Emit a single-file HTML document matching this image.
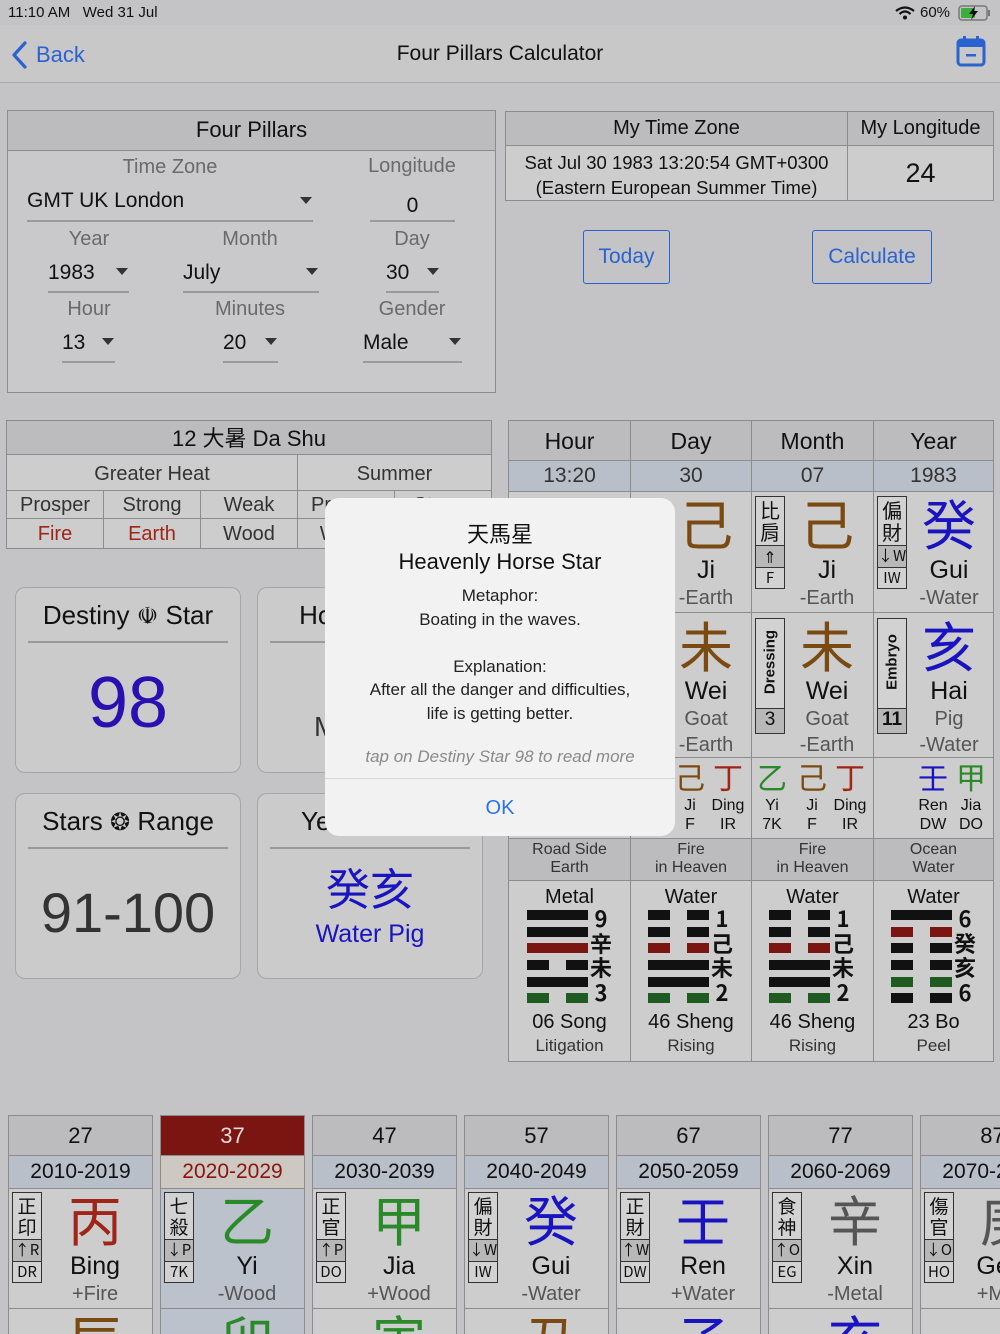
<!DOCTYPE html>
<html style="width:1000px;height:1334px;overflow:hidden"><head><meta charset="utf-8"><style>
*{margin:0;padding:0;box-sizing:border-box}
html{overflow:hidden}
body{width:1000px;height:1334px;overflow:hidden;background:#c4c4c6;font-family:"Liberation Sans","Noto Sans CJK TC",sans-serif;color:#111;position:relative}
.a{position:absolute}
.c{position:absolute;text-align:center;white-space:nowrap}
.b{position:absolute;border:1px solid #8c8c8c}
.g{color:#6a6a6a}
.ul{position:absolute;height:2px;background:#9a9a9a}
.ar{position:absolute;width:0;height:0;border-left:6px solid transparent;border-right:6px solid transparent;border-top:7px solid #333}
.cell{position:absolute;background:#cdcdcd;border:1px solid #8c8c8c}
.hd{background:#bcbcbe}
.dt{background:#b9bfc8}
.card{position:absolute;background:#cbcbcb;border:1.5px solid #a6a6a6;border-radius:10px}
.tg{position:absolute;width:30px;border:1.5px solid #333;background:#d2d2d2;font-size:13px;text-align:center;line-height:1}
.tg div{border-top:1.5px solid #333}
.cj{font-family:"Noto Sans CJK TC","Liberation Sans",sans-serif}
</style></head><body>

<div class="a" style="left:8px;top:4px;font-size:15px">11:10 AM&nbsp;&nbsp;&nbsp;Wed 31 Jul</div>
<div class="a" style="left:920px;top:4px;font-size:15px">60%</div>
<svg class="a" style="left:895px;top:6px" width="20" height="14" viewBox="0 0 20 14"><path d="M1 5 Q10 -2 19 5" stroke="#111" stroke-width="2.2" fill="none"/><path d="M4.5 8 Q10 3 15.5 8" stroke="#111" stroke-width="2.2" fill="none"/><circle cx="10" cy="11.5" r="2" fill="#111"/></svg>
<svg class="a" style="left:958px;top:5px" width="34" height="16" viewBox="0 0 34 16"><rect x="1" y="1" width="28" height="14" rx="3" fill="none" stroke="#777" stroke-width="1.5"/><rect x="3" y="3" width="14" height="10" rx="1" fill="#3cae3c"/><rect x="30" y="5" width="2" height="6" fill="#777"/><path d="M17 1 L11 9 H15 L13 15 L20 6 H16 Z" fill="#111"/></svg>

<div class="a" style="left:0;top:25px;width:1000px;height:58px;background:#c8c8c8;border-bottom:1.5px solid #aaa"></div>
<svg class="a" style="left:10px;top:41px" width="18" height="28" viewBox="0 0 18 28"><path d="M15 2 L4 14 L15 26" stroke="#2a62d0" stroke-width="3.2" fill="none" stroke-linecap="round" stroke-linejoin="round"/></svg>
<div class="a" style="left:36px;top:42px;font-size:22px;color:#2a62d0">Back</div>
<div class="c" style="left:300px;width:400px;top:42px;font-size:21px">Four Pillars Calculator</div>
<svg class="a" style="left:955px;top:35px" width="32" height="32" viewBox="0 0 32 32"><rect x="3" y="5" width="26" height="25" rx="3" fill="none" stroke="#2a62d0" stroke-width="3"/><rect x="3" y="5" width="26" height="7" fill="#2a62d0"/><rect x="8" y="1" width="3" height="7" fill="#2a62d0"/><rect x="21" y="1" width="3" height="7" fill="#2a62d0"/><rect x="11" y="19" width="10" height="2.5" fill="#2a62d0"/></svg>

<div class="b" style="left:7px;top:110px;width:489px;height:283px;background:#c9c9cb"></div>
<div class="b hd" style="left:7px;top:110px;width:489px;height:41px"></div>
<div class="c" style="left:7px;width:489px;top:117px;font-size:22px">Four Pillars</div>
<div class="c g" style="left:70px;width:200px;top:156px;font-size:20px">Time Zone</div>
<div class="c g" style="left:332px;width:160px;top:155px;font-size:20px">Longitude</div>
<div class="a" style="left:27px;top:189px;font-size:21px">GMT UK London</div>
<div class="ar" style="left:300px;top:197px"></div>
<div class="ul" style="left:27px;top:220px;width:286px"></div>
<div class="c" style="left:370px;width:85px;top:194px;font-size:21px">0</div>
<div class="ul" style="left:370px;top:220px;width:85px"></div>
<div class="c g" style="left:9px;width:160px;top:228px;font-size:20px">Year</div>
<div class="c g" style="left:170px;width:160px;top:228px;font-size:20px">Month</div>
<div class="c g" style="left:332px;width:160px;top:228px;font-size:20px">Day</div>
<div class="a" style="left:48px;top:261px;font-size:21px">1983</div>
<div class="ar" style="left:116px;top:268px"></div>
<div class="ul" style="left:48px;top:291px;width:81px"></div>
<div class="a" style="left:183px;top:261px;font-size:21px">July</div>
<div class="ar" style="left:306px;top:268px"></div>
<div class="ul" style="left:183px;top:291px;width:136px"></div>
<div class="a" style="left:386px;top:261px;font-size:21px">30</div>
<div class="ar" style="left:427px;top:268px"></div>
<div class="ul" style="left:386px;top:291px;width:53px"></div>
<div class="c g" style="left:9px;width:160px;top:298px;font-size:20px">Hour</div>
<div class="c g" style="left:170px;width:160px;top:298px;font-size:20px">Minutes</div>
<div class="c g" style="left:332px;width:160px;top:298px;font-size:20px">Gender</div>
<div class="a" style="left:62px;top:331px;font-size:21px">13</div>
<div class="ar" style="left:102px;top:338px"></div>
<div class="ul" style="left:62px;top:361px;width:53px"></div>
<div class="a" style="left:223px;top:331px;font-size:21px">20</div>
<div class="ar" style="left:265px;top:338px"></div>
<div class="ul" style="left:223px;top:361px;width:55px"></div>
<div class="a" style="left:363px;top:331px;font-size:21px">Male</div>
<div class="ar" style="left:449px;top:338px"></div>
<div class="ul" style="left:363px;top:361px;width:99px"></div>

<div class="cell hd" style="left:505px;top:111px;width:343px;height:35px"></div>
<div class="cell hd" style="left:847px;top:111px;width:147px;height:35px"></div>
<div class="cell" style="left:505px;top:145px;width:343px;height:56px"></div>
<div class="cell" style="left:847px;top:145px;width:147px;height:56px"></div>
<div class="c" style="left:505px;width:343px;top:117px;font-size:20px">My Time Zone</div>
<div class="c" style="left:847px;width:147px;top:117px;font-size:20px">My Longitude</div>
<div class="c" style="left:505px;width:343px;top:150px;font-size:18.5px;line-height:25px">Sat Jul 30 1983 13:20:54 GMT+0300<br>(Eastern European Summer Time)</div>
<div class="c" style="left:847px;width:147px;top:158px;font-size:27px">24</div>

<div class="a" style="left:583px;top:230px;width:87px;height:54px;border:1.5px solid #2a62d0;border-radius:3px;color:#2a62d0;font-size:21px;text-align:center;line-height:51px">Today</div>
<div class="a" style="left:812px;top:230px;width:120px;height:54px;border:1.5px solid #2a62d0;border-radius:3px;color:#2a62d0;font-size:21px;text-align:center;line-height:51px">Calculate</div>

<div class="cell hd" style="left:6px;top:420px;width:486px;height:35px"></div>
<div class="c" style="left:6px;width:486px;top:427px;font-size:22px;line-height:24px">12 大暑 Da Shu</div>
<div class="cell" style="left:6px;top:454px;width:292px;height:37px"></div>
<div class="cell" style="left:297px;top:454px;width:195px;height:37px"></div>
<div class="c" style="left:6px;width:292px;top:463px;font-size:20px;color:#333">Greater Heat</div>
<div class="c" style="left:297px;width:195px;top:463px;font-size:20px;color:#333">Summer</div>
<div class="cell" style="left:6px;top:490px;width:98px;height:29px"></div>
<div class="cell" style="left:103px;top:490px;width:98px;height:29px"></div>
<div class="cell" style="left:200px;top:490px;width:98px;height:29px"></div>
<div class="cell" style="left:297px;top:490px;width:98px;height:29px"></div>
<div class="cell" style="left:394px;top:490px;width:98px;height:29px"></div>
<div class="cell" style="left:6px;top:518px;width:98px;height:31px"></div>
<div class="cell" style="left:103px;top:518px;width:98px;height:31px"></div>
<div class="cell" style="left:200px;top:518px;width:98px;height:31px"></div>
<div class="cell" style="left:297px;top:518px;width:98px;height:31px"></div>
<div class="cell" style="left:394px;top:518px;width:98px;height:31px"></div>
<div class="c" style="left:6px;width:98px;top:494px;font-size:20px;color:#333">Prosper</div>
<div class="c" style="left:103px;width:98px;top:494px;font-size:20px;color:#333">Strong</div>
<div class="c" style="left:200px;width:98px;top:494px;font-size:20px;color:#333">Weak</div>
<div class="c" style="left:6px;width:98px;top:523px;font-size:20px;color:#a02418">Fire</div>
<div class="c" style="left:103px;width:98px;top:523px;font-size:20px;color:#a02418">Earth</div>
<div class="c" style="left:200px;width:98px;top:523px;font-size:20px;color:#333">Wood</div>
<div class="c" style="left:297px;width:98px;top:523px;font-size:20px;color:#333">Water</div>
<div class="c" style="left:297px;width:98px;top:494px;font-size:20px;color:#333">Prosper</div>
<div class="c" style="left:394px;width:98px;top:494px;font-size:20px;color:#333">Strong</div>

<div class="card" style="left:15px;top:587px;width:226px;height:186px"></div>
<div class="c" style="left:15px;width:226px;top:600px;font-size:26px">Destiny <span style="font-size:24px">☫</span> Star</div>
<div class="a" style="left:28px;top:641px;width:200px;height:1.5px;background:#999"></div>
<div class="c" style="left:15px;width:226px;top:662px;font-size:72px;color:#2a10b0">98</div>

<div class="card" style="left:257px;top:587px;width:226px;height:186px"></div>
<div class="c" style="left:257px;width:226px;top:600px;font-size:26px">Hour ☸ Star</div>
<div class="a" style="left:270px;top:641px;width:200px;height:1.5px;background:#999"></div>
<div class="c" style="left:257px;width:226px;top:711px;font-size:28px;color:#333">Metal Ox</div>

<div class="card" style="left:15px;top:793px;width:226px;height:186px"></div>
<div class="c" style="left:15px;width:226px;top:806px;font-size:26px">Stars <span style="font-size:24px">❂</span> Range</div>
<div class="a" style="left:28px;top:847px;width:200px;height:1.5px;background:#999"></div>
<div class="c" style="left:15px;width:226px;top:880px;font-size:56px;color:#333">91-100</div>

<div class="card" style="left:257px;top:793px;width:226px;height:186px"></div>
<div class="c" style="left:257px;width:226px;top:806px;font-size:26px">Year ☸ Star</div>
<div class="a" style="left:270px;top:847px;width:200px;height:1.5px;background:#999"></div>
<div class="c cj" style="left:257px;width:226px;top:862px;font-size:44px;color:#1a14c0;line-height:1.1">癸亥</div>
<div class="c" style="left:257px;width:226px;top:920px;font-size:25px;color:#1a14c0">Water Pig</div>

<div class="cell hd" style="left:508px;top:420px;width:123px;height:41px"></div>
<div class="cell hd" style="left:630px;top:420px;width:122px;height:41px"></div>
<div class="cell hd" style="left:751px;top:420px;width:123px;height:41px"></div>
<div class="cell hd" style="left:873px;top:420px;width:121px;height:41px"></div>
<div class="c" style="left:508px;width:123px;top:428px;font-size:23px">Hour</div>
<div class="c" style="left:630px;width:122px;top:428px;font-size:23px">Day</div>
<div class="c" style="left:751px;width:123px;top:428px;font-size:23px">Month</div>
<div class="c" style="left:873px;width:121px;top:428px;font-size:23px">Year</div>
<div class="cell dt" style="left:508px;top:460px;width:123px;height:32px"></div>
<div class="cell dt" style="left:630px;top:460px;width:122px;height:32px"></div>
<div class="cell dt" style="left:751px;top:460px;width:123px;height:32px"></div>
<div class="cell dt" style="left:873px;top:460px;width:121px;height:32px"></div>
<div class="c" style="left:508px;width:123px;top:464px;font-size:21px;color:#333">13:20</div>
<div class="c" style="left:630px;width:122px;top:464px;font-size:21px;color:#333">30</div>
<div class="c" style="left:751px;width:123px;top:464px;font-size:21px;color:#333">07</div>
<div class="c" style="left:873px;width:121px;top:464px;font-size:21px;color:#333">1983</div>
<div class="cell" style="left:508px;top:491px;width:123px;height:122px"></div>
<div class="cell" style="left:630px;top:491px;width:122px;height:122px"></div>
<div class="cell" style="left:751px;top:491px;width:123px;height:122px"></div>
<div class="cell" style="left:873px;top:491px;width:121px;height:122px"></div>
<div class="cell" style="left:508px;top:612px;width:123px;height:146px"></div>
<div class="cell" style="left:630px;top:612px;width:122px;height:146px"></div>
<div class="cell" style="left:751px;top:612px;width:123px;height:146px"></div>
<div class="cell" style="left:873px;top:612px;width:121px;height:146px"></div>
<div class="cell" style="left:508px;top:757px;width:123px;height:82px"></div>
<div class="cell" style="left:630px;top:757px;width:122px;height:82px"></div>
<div class="cell" style="left:751px;top:757px;width:123px;height:82px"></div>
<div class="cell" style="left:873px;top:757px;width:121px;height:82px"></div>
<div class="cell hd" style="left:508px;top:838px;width:123px;height:43px"></div>
<div class="cell hd" style="left:630px;top:838px;width:122px;height:43px"></div>
<div class="cell hd" style="left:751px;top:838px;width:123px;height:43px"></div>
<div class="cell hd" style="left:873px;top:838px;width:121px;height:43px"></div>
<div class="cell" style="left:508px;top:880px;width:123px;height:182px"></div>
<div class="cell" style="left:630px;top:880px;width:122px;height:182px"></div>
<div class="cell" style="left:751px;top:880px;width:123px;height:182px"></div>
<div class="cell" style="left:873px;top:880px;width:121px;height:182px"></div>

<div class="c cj" style="left:666px;width:80px;top:490px;font-size:54px;color:#7a4a12;line-height:1.2">己</div>
<div class="c" style="left:666px;width:80px;top:556px;font-size:25px">Ji</div>
<div class="c g" style="left:666px;width:80px;top:587px;font-size:20px;color:#555">-Earth</div>
<div class="tg cj" style="left:755px;top:496px"><p style="padding:2px 0;line-height:22px;font-size:20px">比<br>肩</p><div style="background:#b8b8b8;height:22px;line-height:20px;font-size:16px">⇑</div><div style="height:21px;line-height:20px;font-size:15px">F</div></div>
<div class="c cj" style="left:787px;width:80px;top:490px;font-size:54px;color:#7a4a12;line-height:1.2">己</div>
<div class="c" style="left:787px;width:80px;top:556px;font-size:25px">Ji</div>
<div class="c" style="left:787px;width:80px;top:587px;font-size:20px;color:#555">-Earth</div>
<div class="tg cj" style="left:877px;top:496px"><p style="padding:2px 0;line-height:22px;font-size:20px">偏<br>財</p><div style="background:#b8b8b8;height:22px;line-height:20px;font-size:15px">↓W</div><div style="height:21px;line-height:20px;font-size:15px">IW</div></div>
<div class="c cj" style="left:909px;width:80px;top:490px;font-size:54px;color:#1a14c0;line-height:1.2">癸</div>
<div class="c" style="left:909px;width:80px;top:556px;font-size:25px">Gui</div>
<div class="c" style="left:909px;width:80px;top:587px;font-size:20px;color:#555">-Water</div>

<div class="c cj" style="left:666px;width:80px;top:612px;font-size:54px;color:#7a4a12;line-height:1.2">未</div>
<div class="c" style="left:666px;width:80px;top:677px;font-size:25px">Wei</div>
<div class="c" style="left:666px;width:80px;top:708px;font-size:20px;color:#555">Goat</div>
<div class="c" style="left:666px;width:80px;top:734px;font-size:20px;color:#555">-Earth</div>
<div class="a" style="left:755px;top:618px;width:30px;height:116px;border:1.5px solid #333;background:#d2d2d2"></div>
<div class="a" style="left:755px;top:708px;width:30px;height:26px;border:1.5px solid #333;background:#b8b8b8;text-align:center;font-size:19px;line-height:22px">3</div>
<div class="a" style="left:770px;top:662px;transform:translate(-50%,-50%) rotate(-90deg);font-size:15px;font-weight:bold;white-space:nowrap">Dressing</div>
<div class="c cj" style="left:787px;width:80px;top:612px;font-size:54px;color:#7a4a12;line-height:1.2">未</div>
<div class="c" style="left:787px;width:80px;top:677px;font-size:25px">Wei</div>
<div class="c" style="left:787px;width:80px;top:708px;font-size:20px;color:#555">Goat</div>
<div class="c" style="left:787px;width:80px;top:734px;font-size:20px;color:#555">-Earth</div>
<div class="a" style="left:877px;top:618px;width:30px;height:116px;border:1.5px solid #333;background:#d2d2d2"></div>
<div class="a" style="left:877px;top:708px;width:30px;height:26px;border:1.5px solid #333;background:#b8b8b8;text-align:center;font-size:19px;line-height:22px;font-weight:bold">11</div>
<div class="a" style="left:892px;top:662px;transform:translate(-50%,-50%) rotate(-90deg);font-size:15px;font-weight:bold;white-space:nowrap">Embryo</div>
<div class="c cj" style="left:909px;width:80px;top:612px;font-size:54px;color:#1a14c0;line-height:1.2">亥</div>
<div class="c" style="left:909px;width:80px;top:677px;font-size:25px">Hai</div>
<div class="c" style="left:909px;width:80px;top:708px;font-size:20px;color:#555">Pig</div>
<div class="c" style="left:909px;width:80px;top:734px;font-size:20px;color:#555">-Water</div>

<div class="c cj" style="left:670px;width:40px;top:758px;font-size:30px;color:#7a4a12;line-height:1.2">己</div>
<div class="c cj" style="left:708px;width:40px;top:758px;font-size:30px;color:#a02418;line-height:1.2">丁</div>
<div class="c" style="left:670px;width:40px;top:796px;font-size:16px;line-height:19px">Ji<br>F</div>
<div class="c" style="left:708px;width:40px;top:796px;font-size:16px;line-height:19px">Ding<br>IR</div>
<div class="c cj" style="left:752px;width:40px;top:758px;font-size:30px;color:#2a8a2a;line-height:1.2">乙</div>
<div class="c cj" style="left:792px;width:40px;top:758px;font-size:30px;color:#7a4a12;line-height:1.2">己</div>
<div class="c cj" style="left:830px;width:40px;top:758px;font-size:30px;color:#a02418;line-height:1.2">丁</div>
<div class="c" style="left:752px;width:40px;top:796px;font-size:16px;line-height:19px">Yi<br>7K</div>
<div class="c" style="left:792px;width:40px;top:796px;font-size:16px;line-height:19px">Ji<br>F</div>
<div class="c" style="left:830px;width:40px;top:796px;font-size:16px;line-height:19px">Ding<br>IR</div>
<div class="c cj" style="left:913px;width:40px;top:758px;font-size:30px;color:#1a14c0;line-height:1.2">壬</div>
<div class="c cj" style="left:951px;width:40px;top:758px;font-size:30px;color:#2a8a2a;line-height:1.2">甲</div>
<div class="c" style="left:913px;width:40px;top:796px;font-size:16px;line-height:19px">Ren<br>DW</div>
<div class="c" style="left:951px;width:40px;top:796px;font-size:16px;line-height:19px">Jia<br>DO</div>

<div class="c" style="left:508px;width:123px;top:841px;font-size:16px;line-height:18px;color:#333">Road Side<br>Earth</div>
<div class="c" style="left:630px;width:122px;top:841px;font-size:16px;line-height:18px;color:#333">Fire<br>in Heaven</div>
<div class="c" style="left:751px;width:123px;top:841px;font-size:16px;line-height:18px;color:#333">Fire<br>in Heaven</div>
<div class="c" style="left:873px;width:121px;top:841px;font-size:16px;line-height:18px;color:#333">Ocean<br>Water</div>

<div class="c" style="left:508px;width:123px;top:886px;font-size:20px">Metal</div>
<div class="c" style="left:630px;width:122px;top:886px;font-size:20px">Water</div>
<div class="c" style="left:751px;width:123px;top:886px;font-size:20px">Water</div>
<div class="c" style="left:873px;width:121px;top:886px;font-size:20px">Water</div>
<svg class="a" style="left:508px;top:905px" width="486" height="100" viewBox="0 0 486 100">
<g>
<rect x="19" y="5" width="61" height="10" fill="#111"/>
<rect x="19" y="22" width="61" height="10" fill="#111"/>
<rect x="19" y="38" width="61" height="10" fill="#7a1512"/>
<rect x="19" y="55" width="22" height="10" fill="#111"/><rect x="58" y="55" width="22" height="10" fill="#111"/>
<rect x="19" y="72" width="61" height="10" fill="#111"/>
<rect x="19" y="88" width="22" height="10" fill="#1f5a20"/><rect x="58" y="88" width="22" height="10" fill="#1f5a20"/>
</g>
<g transform="translate(122,0)">
<rect x="18" y="5" width="22" height="10" fill="#111"/><rect x="57" y="5" width="22" height="10" fill="#111"/>
<rect x="18" y="22" width="22" height="10" fill="#111"/><rect x="57" y="22" width="22" height="10" fill="#111"/>
<rect x="18" y="38" width="22" height="10" fill="#7a1512"/><rect x="57" y="38" width="22" height="10" fill="#7a1512"/>
<rect x="18" y="55" width="61" height="10" fill="#111"/>
<rect x="18" y="72" width="61" height="10" fill="#111"/>
<rect x="18" y="88" width="22" height="10" fill="#1f5a20"/><rect x="57" y="88" width="22" height="10" fill="#1f5a20"/>
</g>
<g transform="translate(243,0)">
<rect x="18" y="5" width="22" height="10" fill="#111"/><rect x="57" y="5" width="22" height="10" fill="#111"/>
<rect x="18" y="22" width="22" height="10" fill="#111"/><rect x="57" y="22" width="22" height="10" fill="#111"/>
<rect x="18" y="38" width="22" height="10" fill="#7a1512"/><rect x="57" y="38" width="22" height="10" fill="#7a1512"/>
<rect x="18" y="55" width="61" height="10" fill="#111"/>
<rect x="18" y="72" width="61" height="10" fill="#111"/>
<rect x="18" y="88" width="22" height="10" fill="#1f5a20"/><rect x="57" y="88" width="22" height="10" fill="#1f5a20"/>
</g>
<g transform="translate(365,0)">
<rect x="18" y="5" width="61" height="10" fill="#111"/>
<rect x="18" y="22" width="22" height="10" fill="#7a1512"/><rect x="57" y="22" width="22" height="10" fill="#7a1512"/>
<rect x="18" y="38" width="22" height="10" fill="#111"/><rect x="57" y="38" width="22" height="10" fill="#111"/>
<rect x="18" y="55" width="22" height="10" fill="#111"/><rect x="57" y="55" width="22" height="10" fill="#111"/>
<rect x="18" y="72" width="22" height="10" fill="#1f5a20"/><rect x="57" y="72" width="22" height="10" fill="#1f5a20"/>
<rect x="18" y="88" width="22" height="10" fill="#111"/><rect x="57" y="88" width="22" height="10" fill="#111"/>
</g>
</svg>
<div class="c cj" style="left:588px;width:26px;top:906px;font-size:22px;font-weight:bold;line-height:24.5px">9<br>辛<br>未<br>3</div>
<div class="c cj" style="left:709px;width:26px;top:906px;font-size:22px;font-weight:bold;line-height:24.5px">1<br>己<br>未<br>2</div>
<div class="c cj" style="left:830px;width:26px;top:906px;font-size:22px;font-weight:bold;line-height:24.5px">1<br>己<br>未<br>2</div>
<div class="c cj" style="left:952px;width:26px;top:906px;font-size:22px;font-weight:bold;line-height:24.5px">6<br>癸<br>亥<br>6</div>
<div class="c" style="left:508px;width:123px;top:1011px;font-size:20px">06 Song</div>
<div class="c" style="left:630px;width:122px;top:1011px;font-size:20px">46 Sheng</div>
<div class="c" style="left:751px;width:123px;top:1011px;font-size:20px">46 Sheng</div>
<div class="c" style="left:873px;width:121px;top:1011px;font-size:20px">23 Bo</div>
<div class="c" style="left:508px;width:123px;top:1036px;font-size:17px;color:#333">Litigation</div>
<div class="c" style="left:630px;width:122px;top:1036px;font-size:17px;color:#333">Rising</div>
<div class="c" style="left:751px;width:123px;top:1036px;font-size:17px;color:#333">Rising</div>
<div class="c" style="left:873px;width:121px;top:1036px;font-size:17px;color:#333">Peel</div>

<div class="cell hd" style="left:8px;top:1115px;width:145px;height:41px"></div><div class="cell dt" style="left:8px;top:1155px;width:145px;height:34px"></div><div class="cell" style="left:8px;top:1188px;width:145px;height:121px"></div><div class="cell" style="left:8px;top:1308px;width:145px;height:40px"></div>
<div class="c" style="left:8px;width:145px;top:1123px;font-size:22px">27</div><div class="c" style="left:8px;width:145px;top:1160px;font-size:21px">2010-2019</div>
<div class="tg cj" style="left:12px;top:1192px"><p style="padding:2px 0;line-height:21px;font-size:19px">正<br>印</p><div style="background:#b8b8b8;height:22px;line-height:20px;font-size:15px">↑R</div><div style="height:21px;line-height:20px;font-size:15px">DR</div></div>
<div class="c cj" style="left:55px;width:80px;top:1186px;font-size:54px;color:#a02418;line-height:1.2">丙</div><div class="c" style="left:55px;width:80px;top:1252px;font-size:25px">Bing</div><div class="c" style="left:55px;width:80px;top:1283px;font-size:20px;color:#555">+Fire</div>
<div class="c cj" style="left:55px;width:80px;top:1306px;font-size:54px;color:#7a4a12;line-height:1.2">辰</div>

<div class="cell" style="left:160px;top:1115px;width:145px;height:41px;background:#7a1512"></div><div class="cell" style="left:160px;top:1155px;width:145px;height:34px;background:#cdc9c2"></div><div class="cell" style="left:160px;top:1188px;width:145px;height:121px;background:#bcc2cb"></div><div class="cell" style="left:160px;top:1308px;width:145px;height:40px;background:#bcc2cb"></div>
<div class="c" style="left:160px;width:145px;top:1123px;font-size:22px;color:#ddd">37</div><div class="c" style="left:160px;width:145px;top:1160px;font-size:21px;color:#8a1410">2020-2029</div>
<div class="tg cj" style="left:164px;top:1192px"><p style="padding:2px 0;line-height:21px;font-size:19px">七<br>殺</p><div style="background:#b8b8b8;height:22px;line-height:20px;font-size:15px">↓P</div><div style="height:21px;line-height:20px;font-size:15px">7K</div></div>
<div class="c cj" style="left:207px;width:80px;top:1186px;font-size:54px;color:#2a8a2a;line-height:1.2">乙</div><div class="c" style="left:207px;width:80px;top:1252px;font-size:25px">Yi</div><div class="c" style="left:207px;width:80px;top:1283px;font-size:20px;color:#555">-Wood</div>
<div class="c cj" style="left:207px;width:80px;top:1306px;font-size:54px;color:#2a8a2a;line-height:1.2">卯</div>

<div class="cell hd" style="left:312px;top:1115px;width:145px;height:41px"></div><div class="cell dt" style="left:312px;top:1155px;width:145px;height:34px"></div><div class="cell" style="left:312px;top:1188px;width:145px;height:121px"></div><div class="cell" style="left:312px;top:1308px;width:145px;height:40px"></div>
<div class="c" style="left:312px;width:145px;top:1123px;font-size:22px">47</div><div class="c" style="left:312px;width:145px;top:1160px;font-size:21px">2030-2039</div>
<div class="tg cj" style="left:316px;top:1192px"><p style="padding:2px 0;line-height:21px;font-size:19px">正<br>官</p><div style="background:#b8b8b8;height:22px;line-height:20px;font-size:15px">↑P</div><div style="height:21px;line-height:20px;font-size:15px">DO</div></div>
<div class="c cj" style="left:359px;width:80px;top:1186px;font-size:54px;color:#2a8a2a;line-height:1.2">甲</div><div class="c" style="left:359px;width:80px;top:1252px;font-size:25px">Jia</div><div class="c" style="left:359px;width:80px;top:1283px;font-size:20px;color:#555">+Wood</div>
<div class="c cj" style="left:359px;width:80px;top:1306px;font-size:54px;color:#2a8a2a;line-height:1.2">寅</div>

<div class="cell hd" style="left:464px;top:1115px;width:145px;height:41px"></div><div class="cell dt" style="left:464px;top:1155px;width:145px;height:34px"></div><div class="cell" style="left:464px;top:1188px;width:145px;height:121px"></div><div class="cell" style="left:464px;top:1308px;width:145px;height:40px"></div>
<div class="c" style="left:464px;width:145px;top:1123px;font-size:22px">57</div><div class="c" style="left:464px;width:145px;top:1160px;font-size:21px">2040-2049</div>
<div class="tg cj" style="left:468px;top:1192px"><p style="padding:2px 0;line-height:21px;font-size:19px">偏<br>財</p><div style="background:#b8b8b8;height:22px;line-height:20px;font-size:15px">↓W</div><div style="height:21px;line-height:20px;font-size:15px">IW</div></div>
<div class="c cj" style="left:511px;width:80px;top:1186px;font-size:54px;color:#1a14c0;line-height:1.2">癸</div><div class="c" style="left:511px;width:80px;top:1252px;font-size:25px">Gui</div><div class="c" style="left:511px;width:80px;top:1283px;font-size:20px;color:#555">-Water</div>
<div class="c cj" style="left:511px;width:80px;top:1306px;font-size:54px;color:#7a4a12;line-height:1.2">丑</div>

<div class="cell hd" style="left:616px;top:1115px;width:145px;height:41px"></div><div class="cell dt" style="left:616px;top:1155px;width:145px;height:34px"></div><div class="cell" style="left:616px;top:1188px;width:145px;height:121px"></div><div class="cell" style="left:616px;top:1308px;width:145px;height:40px"></div>
<div class="c" style="left:616px;width:145px;top:1123px;font-size:22px">67</div><div class="c" style="left:616px;width:145px;top:1160px;font-size:21px">2050-2059</div>
<div class="tg cj" style="left:620px;top:1192px"><p style="padding:2px 0;line-height:21px;font-size:19px">正<br>財</p><div style="background:#b8b8b8;height:22px;line-height:20px;font-size:15px">↑W</div><div style="height:21px;line-height:20px;font-size:15px">DW</div></div>
<div class="c cj" style="left:663px;width:80px;top:1186px;font-size:54px;color:#1a14c0;line-height:1.2">壬</div><div class="c" style="left:663px;width:80px;top:1252px;font-size:25px">Ren</div><div class="c" style="left:663px;width:80px;top:1283px;font-size:20px;color:#555">+Water</div>
<div class="c cj" style="left:663px;width:80px;top:1306px;font-size:54px;color:#1a14c0;line-height:1.2">子</div>

<div class="cell hd" style="left:768px;top:1115px;width:145px;height:41px"></div><div class="cell dt" style="left:768px;top:1155px;width:145px;height:34px"></div><div class="cell" style="left:768px;top:1188px;width:145px;height:121px"></div><div class="cell" style="left:768px;top:1308px;width:145px;height:40px"></div>
<div class="c" style="left:768px;width:145px;top:1123px;font-size:22px">77</div><div class="c" style="left:768px;width:145px;top:1160px;font-size:21px">2060-2069</div>
<div class="tg cj" style="left:772px;top:1192px"><p style="padding:2px 0;line-height:21px;font-size:19px">食<br>神</p><div style="background:#b8b8b8;height:22px;line-height:20px;font-size:15px">↑O</div><div style="height:21px;line-height:20px;font-size:15px">EG</div></div>
<div class="c cj" style="left:815px;width:80px;top:1186px;font-size:54px;color:#555;line-height:1.2">辛</div><div class="c" style="left:815px;width:80px;top:1252px;font-size:25px">Xin</div><div class="c" style="left:815px;width:80px;top:1283px;font-size:20px;color:#555">-Metal</div>
<div class="c cj" style="left:815px;width:80px;top:1306px;font-size:54px;color:#1a14c0;line-height:1.2">亥</div>

<div class="cell hd" style="left:920px;top:1115px;width:145px;height:41px"></div><div class="cell dt" style="left:920px;top:1155px;width:145px;height:34px"></div><div class="cell" style="left:920px;top:1188px;width:145px;height:121px"></div><div class="cell" style="left:920px;top:1308px;width:145px;height:40px"></div>
<div class="c" style="left:920px;width:145px;top:1123px;font-size:22px">87</div><div class="c" style="left:920px;width:145px;top:1160px;font-size:21px">2070-2079</div>
<div class="tg cj" style="left:924px;top:1192px"><p style="padding:2px 0;line-height:21px;font-size:19px">傷<br>官</p><div style="background:#b8b8b8;height:22px;line-height:20px;font-size:15px">↓O</div><div style="height:21px;line-height:20px;font-size:15px">HO</div></div>
<div class="c cj" style="left:967px;width:80px;top:1186px;font-size:54px;color:#555;line-height:1.2">庚</div><div class="c" style="left:967px;width:80px;top:1252px;font-size:25px">Geng</div><div class="c" style="left:967px;width:80px;top:1283px;font-size:20px;color:#555">+Metal</div>

<div class="a" style="left:325px;top:498px;width:350px;height:338px;background:#f2f2f2;border-radius:14px"></div>
<div class="c cj" style="left:325px;width:350px;top:518px;font-size:22px;line-height:30px">天馬星</div>
<div class="c" style="left:325px;width:350px;top:549px;font-size:22px">Heavenly Horse Star</div>
<div class="c" style="left:325px;width:350px;top:584px;font-size:17px;line-height:23.5px;color:#222">Metaphor:<br>Boating in the waves.<br><br>Explanation:<br>After all the danger and difficulties,<br>life is getting better.</div>
<div class="c" style="left:325px;width:350px;top:747px;font-size:17px;font-style:italic;color:#8a8a8a">tap on Destiny Star 98 to read more</div>
<div class="a" style="left:325px;top:778px;width:350px;height:1px;background:#d8d8d8"></div>
<div class="c" style="left:325px;width:350px;top:797px;font-size:20px;color:#2a72e8">OK</div>

</body></html>
